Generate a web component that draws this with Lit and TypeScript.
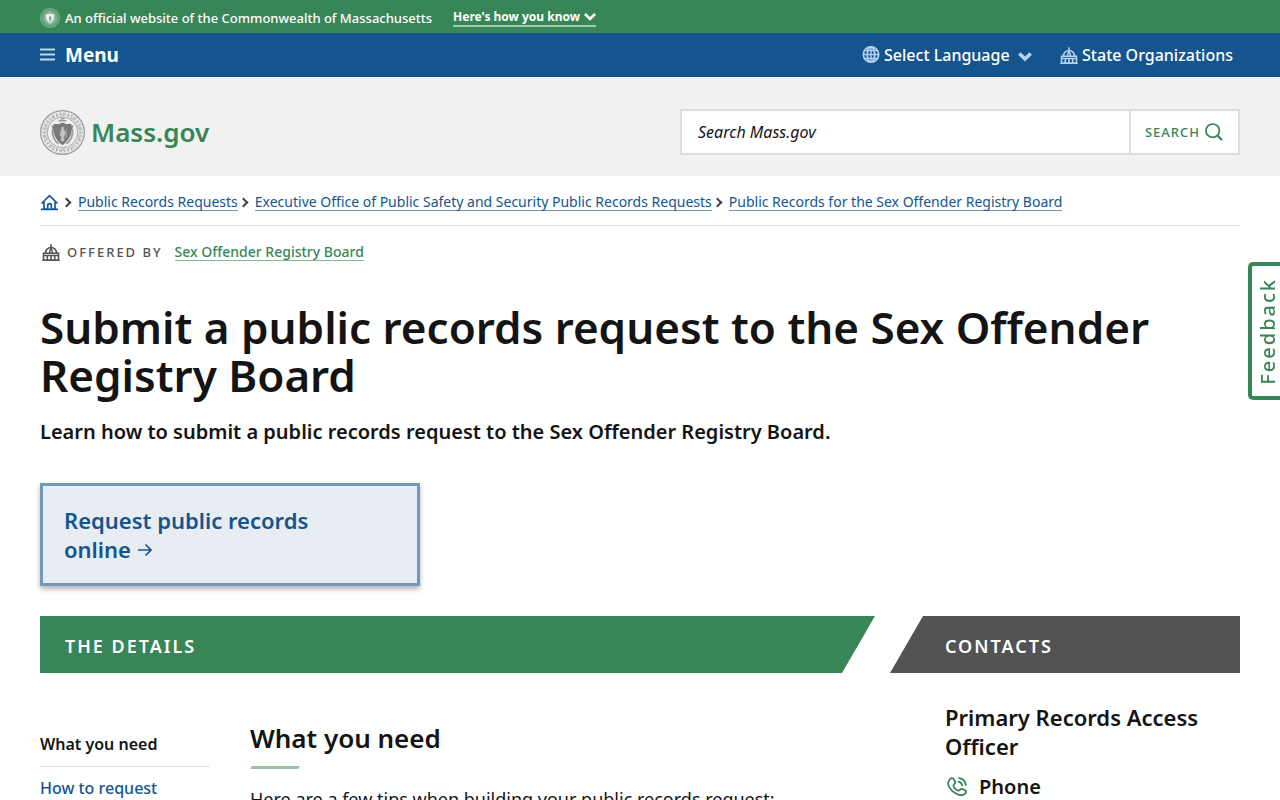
import { LitElement, html, css, svg } from "lit";
import { customElement, property } from "lit/decorators.js";

const capitol = svg`<path d="M9 .3v3M3.500 9a5.500 5.500 0 0 1 11 0M7.500 9c0-1.800.4-3 1.500-4.200 1.100 1.200 1.500 2.400 1.500 4.200M1.500 9.300h15v6.700h-15zM1.500 11.500h15M.3 16.200h17.400M5.300 11.500v4.500M9 11.500v4.500M12.700 11.500v4.500"/>`;
const ringMarks = Array.from({ length: 30 }, (_, i) => i * 12 + 6);

@customElement("mass-seal")
export class MassSeal extends LitElement {
  @property() tone = "dark";

  static styles = css`
    :host { display: block; flex: none; }
    svg { display: block; width: 100%; height: 100%; }
  `;

  render() {
    const light = this.tone === "light";
    const ink = light ? "#9cc6ac" : "#9a9a9a";
    const field = light ? "#eef6f1" : "#7a7a7a";
    const base = light ? "#4f946b" : "#e9e9e9";
    return html`<svg viewBox="0 0 48 48" aria-hidden="true">
      <circle cx="24" cy="24" r="23.300" fill=${base} stroke=${ink} stroke-width="1.300" />
      <g stroke=${ink} stroke-width=".8" fill="none" opacity=".8">
        ${ringMarks.map(
          (a, i) => svg`<path transform="rotate(${a} 24 24)" d=${i % 3 === 0 ? "M22.800 2.800v3.600l2-3.600v3.600" : i % 3 === 1 ? "M23 6.500l1-3.700 1 3.700M23.300 5.200h1.500" : "M25 3h-1.800v1.700H25v1.700h-2"} />`
        )}
      </g>
      <circle cx="24" cy="24" r="16.300" fill=${light ? "#7fb193" : "#efefef"} stroke=${ink} stroke-width=".9" />
      <path d="M12.500 17c2 1 2 3 .9 4.700-.6 5 1.500 11.300 6.600 14.300M35.500 17c-2 1-2 3-.9 4.700.6 5-1.500 11.300-6.600 14.300" fill="none" stroke=${ink} stroke-width="2" />
      <path d="M15 15.500q4.500 1 9-1.500 4.500 2.500 9 1.500c1 9-1.500 16-9 21.500-7.500-5.500-10-12.500-9-21.500z" fill=${field} stroke=${light ? "#fff" : "#6c6c6c"} />
      <path d="M24 18c1.500 0 1.800 2 1 3l2 2.500-.7 4-1 .6.3 5h-3l.3-5-1.200-1 .3-4 1.300-2c-.8-1-.5-3.100 1-3.100zM28 20v10" fill=${light ? "#74aa88" : "#c4c4c4"} stroke=${light ? "#74aa88" : "#c8c8c8"} stroke-width=".6" />
      <path d="M20 11.500h8M22 10l4-1" stroke=${ink} stroke-width="1.500" />
    </svg>`;
  }
}

@customElement("app-root")
export class AppRoot extends LitElement {
  static styles = css`
    :host {
      display: block;
      height: 100vh;
      overflow: hidden;
      background: #fff;
      color: #141414;
      font-family: "Noto Sans", sans-serif;
      font-size: 16px;
      line-height: 24px;
    }
    * { box-sizing: border-box; }
    h1, h2, h3, p, ul, ol { margin: 0; padding: 0; }
    ul, ol { list-style: none; }
    a { text-decoration: none; color: inherit; }
    button, input, select { font: inherit; color: inherit; border: 0; background: none; padding: 0; margin: 0; border-radius: 0; }
    button { cursor: pointer; }
    .icon { fill: none; stroke: currentColor; flex: none; display: block; }
    .wrap { padding: 0 40px; }

    .official { display: flex; align-items: center; height: 33px; padding-top: 2px; background: #388557; color: #fff; font-size: 13px; font-weight: 500; }
    .official mass-seal { width: 20px; height: 20px; margin-right: 5px; }
    .know { display: flex; align-items: center; gap: 4px; margin-left: 21px; padding-top: 1px; font-weight: 700; font-size: 12px; line-height: 16px; border-bottom: 2px solid #9fcbb0; }

    .nav { display: flex; align-items: center; height: 44px; background: #14558f; color: #fff; }
    .menu { display: flex; align-items: center; gap: 10px; font-size: 19px; font-weight: 700; }
    .tools { display: flex; align-items: center; gap: 28px; margin-left: auto; padding-right: 7px; font-weight: 500; }
    .tool { display: flex; align-items: center; gap: 4px; }
    .tool .icon { color: #b5d2f0; }
    .tool select { appearance: none; cursor: pointer; }
    .tool option { color: #141414; }
    .lang .chevron { margin: 4px 0 0 4px; }

    .header { display: flex; align-items: center; justify-content: space-between; padding-top: 32px; padding-bottom: 21px; background: #f1f1f1; }
    .brand { display: flex; align-items: center; gap: 6px; color: #388557; font-size: 26px; line-height: 46px; font-weight: 600; }
    .brand mass-seal { width: 45px; height: 45px; }
    .search { display: flex; width: 560px; height: 46px; border: 2px solid #dcdcdc; background: #fff; }
    .search input { flex: 1; min-width: 0; padding: 0 16px; }
    .search input::placeholder { color: #141414; font-style: italic; opacity: 1; }
    .search button { display: flex; align-items: center; gap: 5px; padding: 0 15px 0 14px; border-left: 2px solid #dcdcdc; color: #388557; font-size: 13px; font-weight: 500; letter-spacing: 1px; }

    .crumbs { display: flex; align-items: center; margin-top: 7px; padding: 10px 0 14px; border-bottom: 1px solid #dcdcdc; color: #14558f; font-size: 14px; line-height: 17px; }
    .crumbs li { display: flex; align-items: center; }
    .crumbs li + li::before { content: ""; width: 5px; height: 5px; margin: 0 8px 0 2px; border: solid #444; border-width: 2px 2px 0 0; transform: rotate(45deg); }
    .crumbs a.text { border-bottom: 1px solid #7298bc; }

    .offered { display: flex; align-items: center; margin-top: 17px; font-size: 14px; line-height: 17px; font-weight: 500; }
    .offered .label { margin-left: 7px; margin-right: 12px; color: #535353; font-size: 13px; letter-spacing: 2px; }
    .offered .icon { color: #535353; margin-left: 2px; }
    .offered a { color: #388557; border-bottom: 1px solid #88b69a; }

    h1 { margin-top: 42px; font-size: 44px; line-height: 48px; font-weight: 600; }
    .lead { margin-top: 20px; font-size: 20px; line-height: 26px; font-weight: 600; }
    .cta { display: block; width: 380px; max-width: 100%; margin-top: 38px; padding: 20px 80px 19px 21px; border: 3px solid #7298bc; background: #e8edf4; box-shadow: 0 3px 5px rgba(0, 0, 0, .3); color: #14558f; font-size: 22px; line-height: 29px; font-weight: 600; }
    .cta .icon { display: inline-block; }

    .columns { display: grid; grid-template-columns: minmax(0, 1fr) 350px; gap: 15px; margin-top: 30px; }
    .bar { padding: 16px 25px 12px; color: #fff; font-size: 18px; line-height: 29px; font-weight: 600; letter-spacing: 2px; text-transform: uppercase; }
    .bar.green { background: #388557; clip-path: polygon(0 0, 100% 0, calc(100% - 33px) 100%, 0 100%); }
    .bar.gray { padding-left: 55px; background: #535353; clip-path: polygon(33px 0, 100% 0, 100% 100%, 0 100%); }
    .details { display: grid; grid-template-columns: 170px minmax(0, 1fr); gap: 40px; }
    .toc { padding-top: 60px; line-height: 23px; font-weight: 500; }
    .toc li + li { border-top: 1px solid #dcdcdc; }
    .toc a { display: block; padding: 0 0 10px; color: #14558f; }
    .toc li + li a { padding: 10px 0; }
    .toc .current { color: #141414; font-weight: 600; }
    .section { padding-top: 47px; }
    .section h2 { font-size: 26px; line-height: 36px; font-weight: 600; }
    .section h2::after { content: ""; display: block; width: 50px; height: 3px; margin-top: 10px; background: #9cc2ab; clip-path: polygon(2px 0, 100% 0, calc(100% - 2px) 100%, 0 100%); }
    .section p { margin-top: 17px; font-size: 18px; line-height: 27px; }
    .contact { padding: 30px 0 0 55px; }
    .contact h3 { font-size: 22px; line-height: 29px; font-weight: 600; }
    .phone { display: flex; align-items: center; gap: 12px; margin-top: 13px; padding-left: 2px; font-size: 20px; line-height: 26px; font-weight: 600; }
    .phone .icon { color: #388557; }

    .feedback { position: fixed; top: 262px; right: 0; width: 32px; height: 138px; padding-left: 4px; border: 4px solid #388557; border-right: 0; border-radius: 5px 0 0 5px; background: #fff; color: #388557; font-size: 20px; line-height: 24px; font-weight: 500; letter-spacing: 2px; }
    .feedback span { display: block; margin: 0 auto; writing-mode: vertical-rl; rotate: 180deg; }
  `;

  render() {
    return html`
      <div class="official wrap">
        <mass-seal tone="light"></mass-seal>
        <span>An official website of the Commonwealth of Massachusetts</span>
        <button class="know">Here's how you know
          <svg class="icon" width="12" height="8" viewBox="0 0 12 8" stroke-width="2.600"><path d="M1 1l5 5 5-5" /></svg>
        </button>
      </div>
      <nav class="nav wrap" aria-label="Main">
        <button class="menu">
          <svg class="icon" width="15" height="14" viewBox="0 0 15 14"><path d="M0 1.500h15M0 6.500h15M0 11.500h15" stroke="#c3d7ea" stroke-width="1.800" /></svg>
          Menu
        </button>
        <div class="tools">
          <label class="tool lang">
            <svg class="icon" width="18" height="18" viewBox="0 0 18 18" stroke-width="1.700"><circle cx="9" cy="8.500" r="7.700" /><ellipse cx="9" cy="8.500" rx="3.700" ry="7.700" /><path d="M9 .5v16M1.300 8.500h15.400M2.600 4.500h12.800M2.600 12.500h12.800" stroke-width="1.400" /></svg>
            <select aria-label="Select Language"><option>Select Language</option></select>
            <svg class="icon chevron" width="14" height="10" viewBox="0 0 14 10" stroke-width="3.600"><path d="M1.300 1.500L7 7l5.700-5.500" /></svg>
          </label>
          <a class="tool" href="#organizations">
            <svg class="icon" width="18" height="17" viewBox="0 0 18 17" stroke-width="1.500">${capitol}</svg>
            State Organizations
          </a>
        </div>
      </nav>
      <header class="header wrap">
        <a class="brand" href="#home"><mass-seal></mass-seal>Mass.gov</a>
        <form class="search" role="search" @submit=${(e: Event) => e.preventDefault()}>
          <input type="text" aria-label="Search Mass.gov" placeholder="Search Mass.gov" />
          <button type="submit">SEARCH
            <svg class="icon" width="18" height="18" viewBox="0 0 18 18" stroke-width="1.700"><circle cx="7.700" cy="7.700" r="6.700" /><path d="M12.500 12.500L17 17" stroke-width="2.200" /></svg>
          </button>
        </form>
      </header>
      <main class="wrap">
        <nav aria-label="Breadcrumb">
          <ol class="crumbs">
            <li><a href="#home" aria-label="Home"><svg class="icon" width="21" height="17" viewBox="0 0 21 17" stroke-width="1.700"><path d="M1.500 9.500l8-7.800 8 7.800M4 8v7.200h3.700v-3.700a1.800 1.800 0 0 1 3.600 0v3.700H15V8M1 15.400h17" /></svg></a></li>
            <li><a class="text" href="#records">Public Records Requests</a></li>
            <li><a class="text" href="#eopss">Executive Office of Public Safety and Security Public Records Requests</a></li>
            <li><a class="text" href="#sorb">Public Records for the Sex Offender Registry Board</a></li>
          </ol>
        </nav>
        <div class="offered">
          <svg class="icon" width="18" height="17" viewBox="0 0 18 17" stroke-width="1.600">${capitol}</svg>
          <span class="label">OFFERED BY</span>
          <a href="#board">Sex Offender Registry Board</a>
        </div>
        <h1>Submit a public records request to the Sex Offender Registry Board</h1>
        <p class="lead">Learn how to submit a public records request to the Sex Offender Registry Board.</p>
        <a class="cta" href="#request">Request public records online
          <svg class="icon" width="15" height="16" viewBox="0 0 15 16" stroke-width="1.600"><path d="M1 8h12.500M8.500 2.500L14 8l-5.500 5.500" /></svg></a>
        <div class="columns">
          <section>
            <h2 class="bar green">The Details</h2>
            <div class="details">
              <ul class="toc">
                <li><a class="current" href="#need">What you need</a></li>
                <li><a href="#how">How to request</a></li>
              </ul>
              <div class="section">
                <h2>What you need</h2>
                <p>Here are a few tips when building your public records request:</p>
              </div>
            </div>
          </section>
          <aside>
            <h2 class="bar gray">Contacts</h2>
            <div class="contact">
              <h3>Primary Records Access Officer</h3>
              <div class="phone">
                <svg class="icon" width="20" height="20" viewBox="0 0 20 20" stroke-width="1.800" stroke-linejoin="round" stroke-linecap="round"><path d="M3.200 1.900C4.500.700 6 .800 6.800 2.100L8 4.500c.6 1.200.1 2-.8 2.700-.9.700-1 1.400-.4 2.600.8 1.600 1.900 2.700 3.500 3.500 1.200.6 1.900.5 2.600-.4.800-1 1.600-1.400 2.800-.9l2.400 1.200c1.400.8 1.300 2.300.1 3.500-2.300 2.200-5.600 1.900-9.300-.2C5.500 14.600 3 12 1.500 8.500.6 5.500 1.300 3.500 3.200 1.900zM11.500 4.600c2 .4 3.300 1.700 3.700 3.800M12 1.200c3.800.5 6.200 2.900 6.800 6.800" /></svg>
                Phone
              </div>
            </div>
          </aside>
        </div>
      </main>
      <button class="feedback"><span>Feedback</span></button>
    `;
  }
}
